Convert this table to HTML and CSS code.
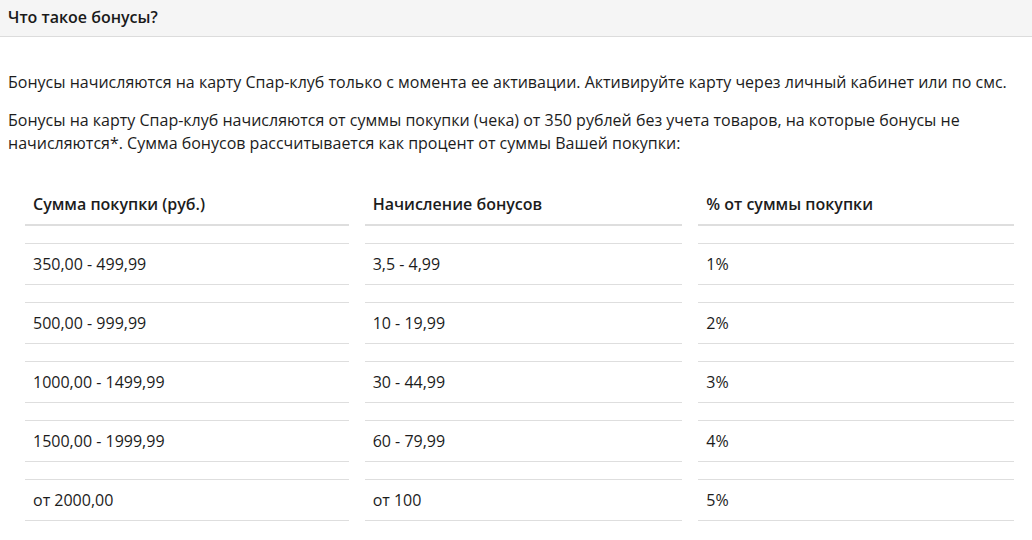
FILE: index.html
```html
<!DOCTYPE html>
<html lang="ru">
<head>
<meta charset="utf-8">
<title>Что такое бонусы?</title>
<link rel="stylesheet" href="styles.css">
</head>
<body>
<div class="panel">
  <div class="panel-head">Что такое бонусы?</div>
  <div class="panel-body">
    <p class="text first">Бонусы начисляются на карту Спар-клуб только с момента ее активации. Активируйте карту через личный кабинет или по смс.</p>
    <p class="text">Бонусы на карту Спар-клуб начисляются от суммы покупки (чека) от 350 рублей без учета товаров, на которые бонусы не начисляются*. Сумма бонусов рассчитывается как процент от суммы Вашей покупки:</p>
    <table class="bonus-table">
      <colgroup>
        <col class="c1"><col class="c2"><col class="c3">
      </colgroup>
      <thead>
        <tr><th>Сумма покупки (руб.)</th><th>Начисление бонусов</th><th>% от суммы покупки</th></tr>
      </thead>
      <tbody>
        <tr><td>350,00 - 499,99</td><td>3,5 - 4,99</td><td>1%</td></tr>
        <tr><td>500,00 - 999,99</td><td>10 - 19,99</td><td>2%</td></tr>
        <tr><td>1000,00 - 1499,99</td><td>30 - 44,99</td><td>3%</td></tr>
        <tr><td>1500,00 - 1999,99</td><td>60 - 79,99</td><td>4%</td></tr>
        <tr><td>от 2000,00</td><td>от 100</td><td>5%</td></tr>
      </tbody>
    </table>
  </div>
</div>
</body>
</html>
```
FILE: styles.css
```css
* { box-sizing: border-box; }
html, body { margin: 0; padding: 0; background: #fff; }
body {
  font-family: "Open Sans", "Noto Sans", sans-serif;
  color: #1c1c1c;
  overflow: hidden;
}
.panel-head {
  height: 37px;
  background: #f5f5f5;
  border-bottom: 1px solid #dcdcdc;
  padding: 6px 8px 0;
  font-size: 16px;
  font-weight: 600;
  color: #1a1a1a;
  line-height: 22px;
}
.panel-body {
  padding: 34px 2px 0 9px;
}
.text {
  margin: 0 0 0 -1px;
  font-size: 16px;
  line-height: 23px;
}
.text.first { margin-bottom: 15px; }
.bonus-table {
  width: 100%;
  border-collapse: separate;
  border-spacing: 16px 17px;
  margin-top: 12px;
  font-size: 16px;
}
.c1 { width: 324px; }
.c2 { width: 318px; }
.c3 { width: 316px; }
.bonus-table th {
  text-align: left;
  font-weight: 600;
  height: 42px;
  padding: 0 8px;
  border-bottom: 2px solid #dedede;
  vertical-align: middle;
}
.bonus-table td {
  height: 42px;
  padding: 0 8px;
  border-top: 1px solid #dedede;
  border-bottom: 1px solid #dedede;
  vertical-align: middle;
}
```
